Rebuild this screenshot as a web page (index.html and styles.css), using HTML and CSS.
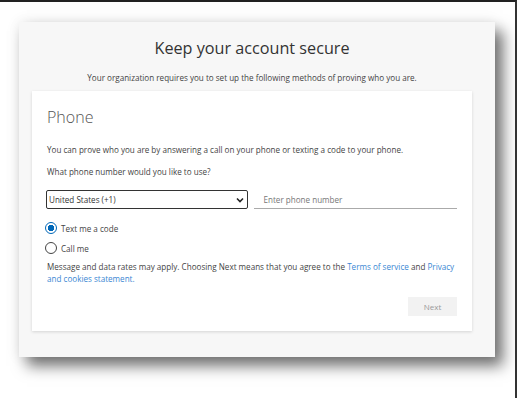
FILE: index.html
```html
<!DOCTYPE html>
<html lang="en">
<head>
    <meta charset="UTF-8">
    <meta name="viewport" content="width=device-width, initial-scale=1.0">
    <link rel="stylesheet" href="styles.css">
    <title>Keep your account secure</title>
</head>
<body>
    <div class="janela">
        <h1 class="titulo">Keep your account secure</h1>
        <p class="subtitulo">Your organization requires you to set up the following methods of proving who you are.</p>

        <div class="cartao">
            <h2>Phone</h2>
            <p class="texto">You can prove who you are by answering a call on your phone or texting a code to your phone.</p>
            <p class="texto pergunta">What phone number would you like to use?</p>

            <div class="linha">
                <div class="pais">
                    <span>United States (+1)</span>
                    <svg width="8" height="6" viewBox="0 0 8 6"><path d="M1 1.5 L4 4.5 L7 1.5" fill="none" stroke="#222" stroke-width="1.6"/></svg>
                </div>
                <div class="numero">Enter phone number</div>
            </div>

            <div class="opcao primeira">
                <span class="radio marcado"></span>
                <span>Text me a code</span>
            </div>
            <div class="opcao">
                <span class="radio"></span>
                <span>Call me</span>
            </div>

            <p class="texto aviso">Message and data rates may apply. Choosing Next means that you agree to the <a href="#">Terms of service</a> and <a href="#">Privacy and cookies statement.</a></p>

            <div class="acoes">
                <button class="botao">Next</button>
            </div>
        </div>
    </div>
</body>
</html>
```

FILE: styles.css
```css
body {
    margin: 0;
    height: 398px;
    box-sizing: border-box;
    border-top: 2px solid #222;
    border-right: 2px solid #333;
    background-color: #fff;
    font-family: "Open Sans", Arial, sans-serif;
    color: #323130;
}

.janela {
    width: 476px;
    height: 335px;
    box-sizing: border-box;
    margin: 20px 0 0 19px;
    padding: 13px 23px 0 13px;
    background-color: #f7f7f7;
    box-shadow: 0 0 14px rgba(0, 0, 0, 0.08), 8px 9px 14px rgba(0, 0, 0, 0.55);
}

.titulo {
    margin: 0;
    font-size: 16.2px;
    font-weight: 400;
    line-height: 26px;
    text-align: center;
    color: #333;
}

.subtitulo {
    margin: 11px 0 7px;
    font-size: 8.1px;
    line-height: 12px;
    text-align: center;
    color: #444;
}

.cartao {
    background-color: #fff;
    padding: 14px 15px 15px 15px;
    box-shadow: 0 1px 3px rgba(0, 0, 0, 0.14);
}

h2 {
    margin: 0;
    font-size: 16px;
    font-weight: 300;
    line-height: 24px;
    color: #555;
}

.texto {
    margin: 15px 0 0;
    font-size: 8.1px;
    line-height: 12px;
    color: #444;
}

.pergunta {
    margin-top: 10px;
}

.linha {
    display: flex;
    gap: 6px;
    margin-top: 12px;
    margin-left: -1px;
}

.pais {
    width: 205px;
    height: 19px;
    box-sizing: border-box;
    border: 1.5px solid #333;
    border-radius: 2px;
    display: flex;
    align-items: center;
    justify-content: space-between;
    padding: 0 3px 0 2px;
    font-size: 8.1px;
    color: #333;
}

.numero {
    width: 205px;
    height: 19px;
    box-sizing: border-box;
    border-bottom: 1px solid #aaa;
    padding-left: 9px;
    display: flex;
    align-items: center;
    font-size: 8.1px;
    color: #777;
}

.opcao {
    display: flex;
    align-items: center;
    gap: 4px;
    height: 14px;
    margin-top: 6px;
    font-size: 8.1px;
    color: #444;
}

.primeira {
    margin-top: 12px;
}

.radio {
    width: 12px;
    height: 12px;
    box-sizing: border-box;
    border: 1px solid #444;
    border-radius: 50%;
    margin-left: -2px;
}

.marcado {
    border-color: #0067b8;
    background: radial-gradient(circle, #0067b8 0 3px, #fff 3.5px);
}

.aviso {
    margin-top: 6px;
}

.aviso a {
    color: #3a87d3;
    text-decoration: none;
}

.acoes {
    display: flex;
    justify-content: flex-end;
    margin-top: 12px;
}

.botao {
    width: 49px;
    height: 19px;
    border: none;
    background-color: #f2f2f2;
    color: #999;
    font-family: "Open Sans", Arial, sans-serif;
    font-size: 8px;
}
```
